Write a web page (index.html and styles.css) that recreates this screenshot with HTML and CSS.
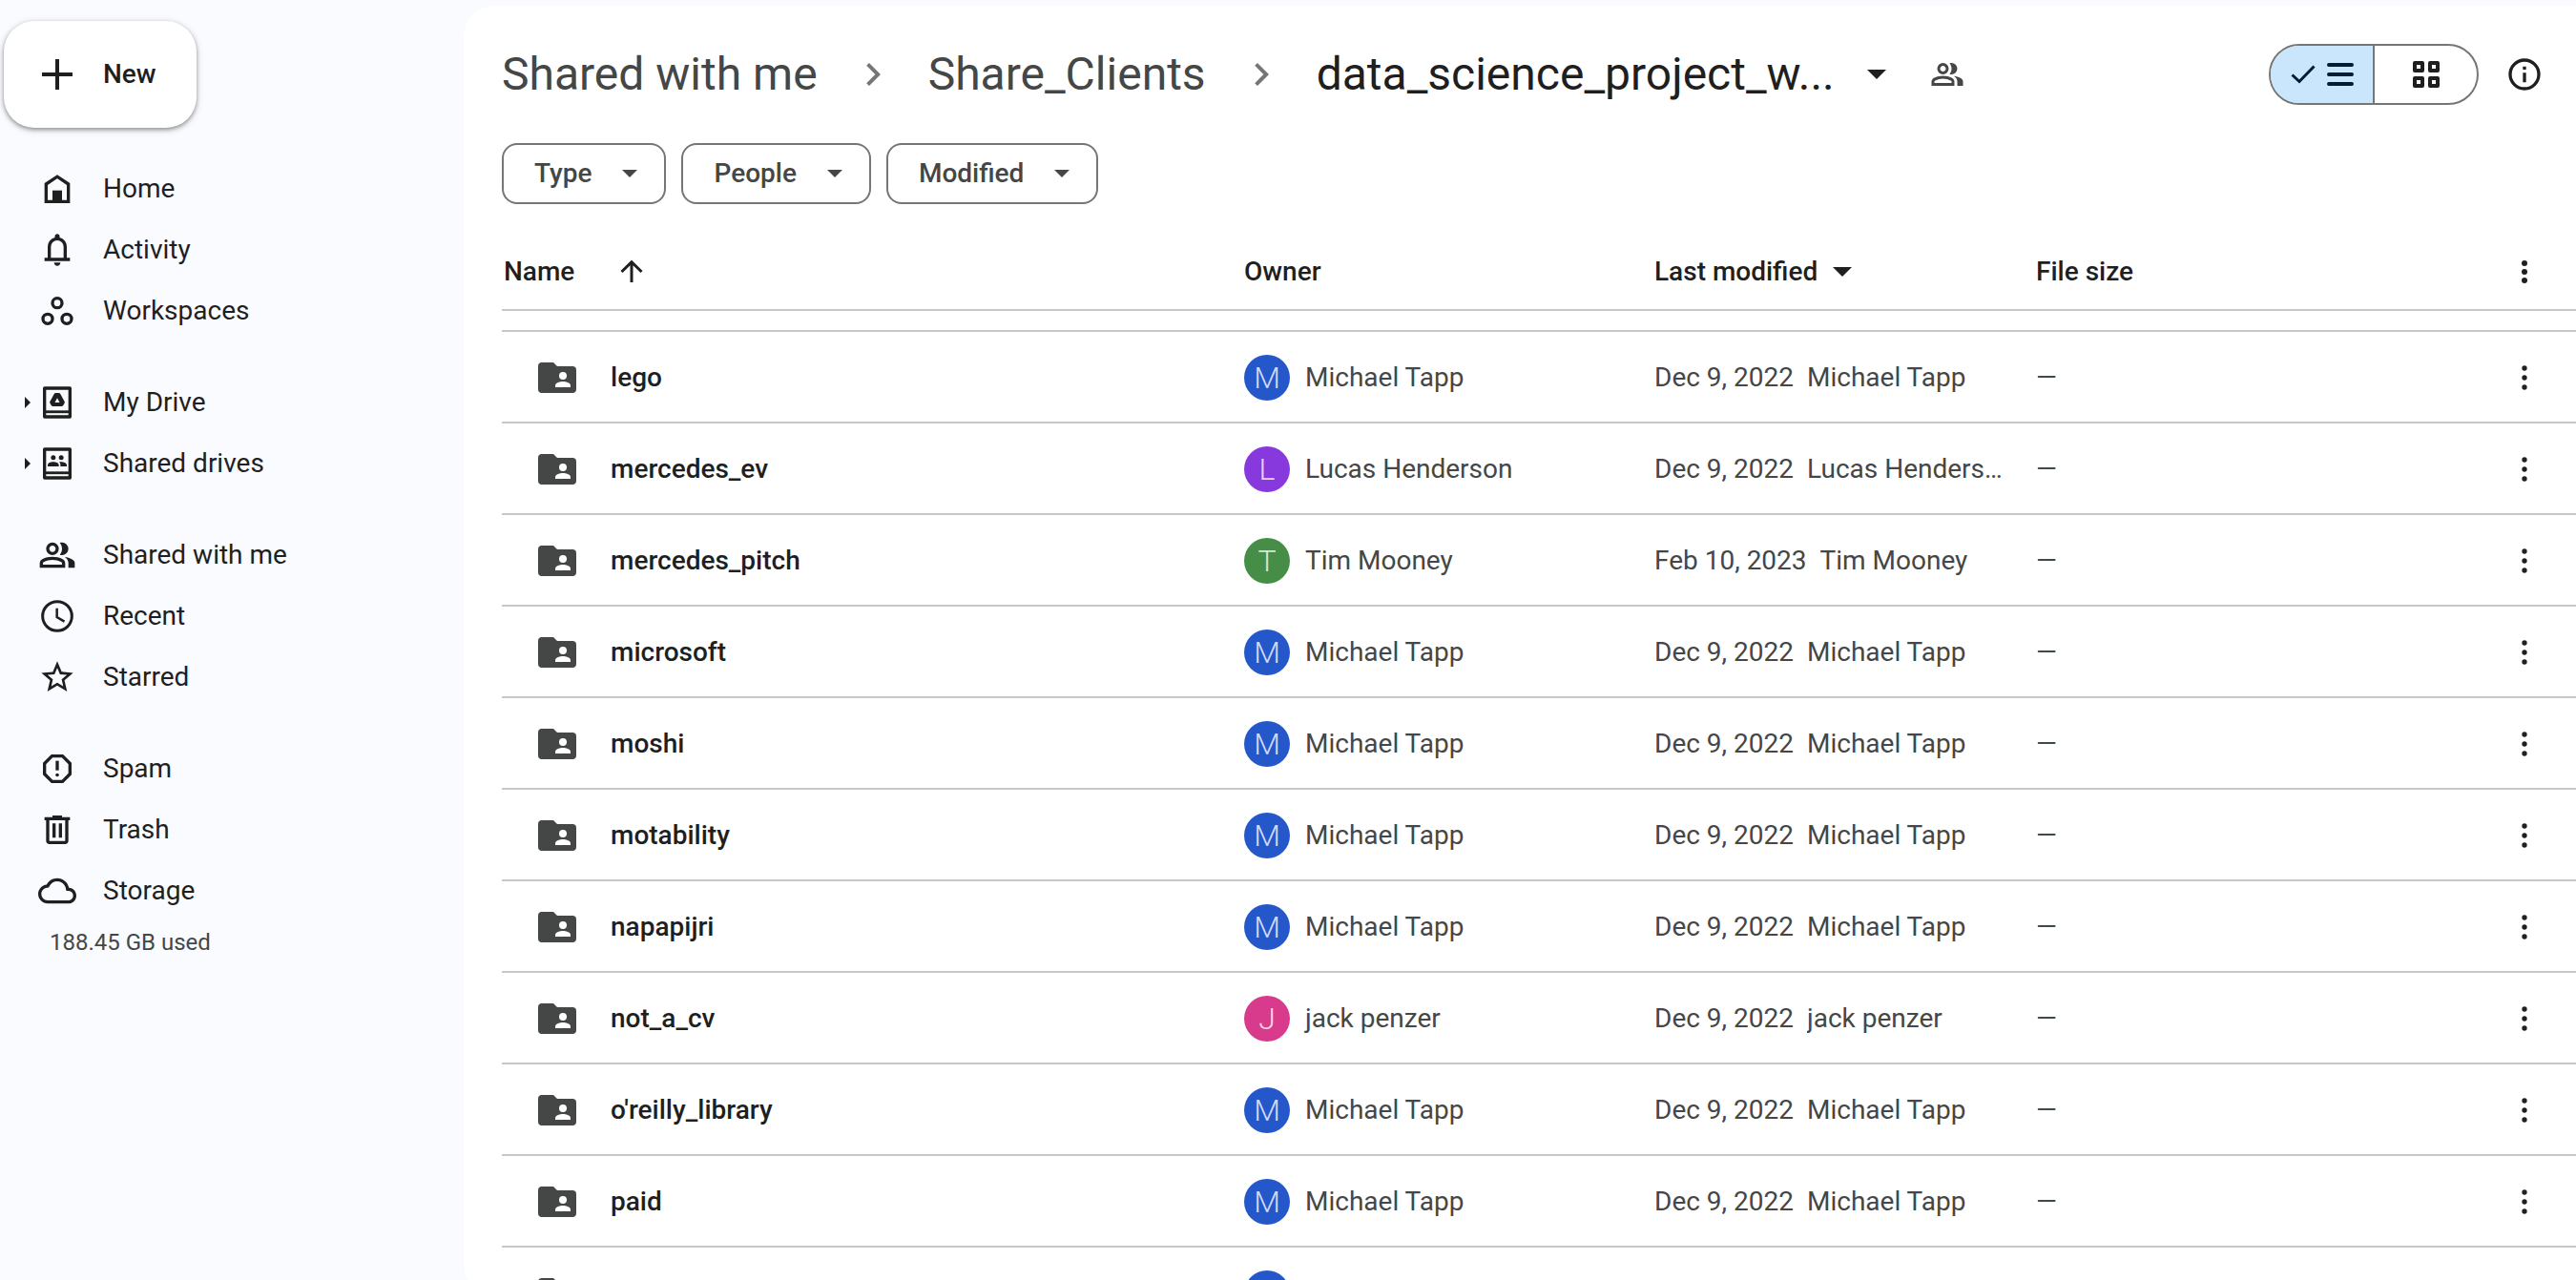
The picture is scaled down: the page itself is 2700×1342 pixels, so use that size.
FILE: index.html
```html
<!DOCTYPE html>
<html lang="en">
<head>
<meta charset="utf-8">
<meta name="viewport" content="width=device-width, initial-scale=1">
<title>data_science_project_w... - Drive</title>
<link rel="stylesheet" href="styles.css">
</head>
<body>
<svg class="sprite" aria-hidden="true">
  <symbol id="plus" viewBox="0 0 32 32"><path d="M14 0h4v14h14v4H18v14h-4V18H0v-4h14z"/></symbol>
  <symbol id="home" viewBox="0 0 24 24"><path d="M5 20V9l7-4.700 7 4.700V20z" fill="none" stroke="currentColor" stroke-width="2"/><path d="M9 13h6v7H9z"/></symbol>
  <symbol id="bell" viewBox="0 0 24 24"><path d="M4 19v-2h2v-7q0-2.075 1.250-3.687T10.500 4.200v-.7q0-.625.438-1.062T12 2t1.063.438T13.500 3.500v.7q2 .5 3.250 2.113T18 10v7h2v2zm8 3q-.825 0-1.412-.587T10 20h4q0 .825-.587 1.413T12 22m-4-5h8v-7q0-1.650-1.175-2.825T12 6 9.175 7.175 8 10z"/></symbol>
  <symbol id="spaces" viewBox="0 0 24 24"><g fill="none" stroke="currentColor" stroke-width="2"><circle cx="12" cy="7" r="3"/><circle cx="6" cy="17" r="3"/><circle cx="18" cy="17" r="3"/></g></symbol>
  <symbol id="drive" viewBox="0 0 24 24"><path d="M4 3h16v18H4z" fill="none" stroke="currentColor" stroke-width="2" stroke-linejoin="round"/><path d="M4 17h16v1.700H4z"/><path d="M11 7h2l2.700 4.900-.9 1.500H9.200l-.9-1.500z" stroke="currentColor" stroke-width="2" stroke-linejoin="round"/><path class="cutout" d="M12 9.200l1.500 2.800h-3z"/></symbol>
  <symbol id="shared-drive" viewBox="0 0 24 24"><path d="M4 3h16v18H4z" fill="none" stroke="currentColor" stroke-width="2" stroke-linejoin="round"/><path d="M4 17h16v1.700H4z"/><circle cx="9.500" cy="8.300" r="1.500"/><circle cx="14.500" cy="8.300" r="1.500"/><path d="M6 13.800v-.9c0-1.300 1.800-2 3.500-2s3.500.7 3.500 2v.9zM14 13.800v-1c0-.7-.3-1.300-.8-1.800 2-.4 4.800.4 4.800 1.900v.9z"/></symbol>
  <symbol id="people" viewBox="0 0 24 24"><path d="M1 20v-2.800q0-.85.438-1.563T2.600 14.550q1.550-.775 3.150-1.163T9 13t3.250.388 3.150 1.162q.725.375 1.163 1.088T17 17.200V20zm18 0v-3q0-1.100-.612-2.113T16.650 13.150q1.275.15 2.400.513t2.100.887q.9.5 1.375 1.112T23 17v3zM9 12q-1.650 0-2.825-1.175T5 8t1.175-2.825T9 4t2.825 1.175T13 8t-1.175 2.825T9 12m10-4q0 1.650-1.175 2.825T15 12q-.275 0-.7-.062T13.600 11.800q.675-.8 1.038-1.775T15 8t-.362-2.025T13.600 4.200q.35-.125.7-.163T15 4q1.650 0 2.825 1.175T19 8M3 18h12v-.8q0-.275-.137-.5t-.363-.35q-1.350-.675-2.725-1.012T9 15t-2.775.338T3.500 16.350q-.225.125-.363.35T3 17.200zm6-8q.825 0 1.413-.587T11 8t-.587-1.412T9 6t-1.412.588T7 8t.588 1.413T9 10"/></symbol>
  <symbol id="clock" viewBox="0 0 24 24"><g fill="none" stroke="currentColor"><circle cx="12" cy="12" r="9.200" stroke-width="1.800"/><path d="M11.800 7v5.600l4.700 2.800" stroke-width="1.500"/></g></symbol>
  <symbol id="star" viewBox="0 0 24 24"><path d="M22 9.240l-7.190-.62L12 2 9.190 8.630 2 9.240l5.460 4.730L5.820 21 12 17.270 18.180 21l-1.630-7.030L22 9.240zM12 15.400l-3.760 2.270 1-4.280-3.320-2.880 4.380-.38L12 6.100l1.710 4.040 4.380.38-3.320 2.880 1 4.280L12 15.400z"/></symbol>
  <symbol id="spam" viewBox="0 0 24 24"><path d="M8.700 4h6.600L20 8.700v6.600L15.300 20H8.700L4 15.300V8.700z" fill="none" stroke="currentColor" stroke-width="2"/><path d="M11 7h2v6h-2z"/><circle cx="12" cy="15.900" r="1.100"/></symbol>
  <symbol id="trash" viewBox="0 0 24 24"><path d="M7 21q-.825 0-1.412-.587T5 19V6H4V4h5V3h6v1h5v2h-1v13q0 .825-.587 1.413T17 21zM17 6H7v13h10zM9 17h2V8H9zm4 0h2V8h-2z"/></symbol>
  <symbol id="cloud" viewBox="0 0 24 24"><path d="M19.350 10.040C18.670 6.590 15.640 4 12 4 9.110 4 6.600 5.640 5.350 8.040 2.340 8.360 0 10.910 0 14c0 3.310 2.690 6 6 6h13c2.760 0 5-2.240 5-5 0-2.640-2.050-4.780-4.650-4.960zM19 18H6c-2.210 0-4-1.790-4-4 0-2.050 1.530-3.760 3.560-3.970l1.070-.11.5-.95C8.080 7.140 9.940 6 12 6c2.620 0 4.880 1.860 5.390 4.430l.3 1.500 1.530.11c1.560.1 2.780 1.410 2.780 2.960 0 1.650-1.350 3-3 3z"/></symbol>
  <symbol id="chevron" viewBox="0 0 24 24"><path d="M10 6L8.590 7.410 13.170 12l-4.580 4.590L10 18l6-6z"/></symbol>
  <symbol id="caret" viewBox="0 0 20 10"><path d="M0 0h20L10 10z"/></symbol>
  <symbol id="expand" viewBox="0 0 6 12"><path d="M0 0l6 6-6 6z"/></symbol>
  <symbol id="arrow-up" viewBox="0 0 24 24"><path d="M12 23V2M1.500 12L12 1.700 22.500 12" fill="none" stroke="currentColor" stroke-width="3"/></symbol>
  <symbol id="check" viewBox="0 0 26 20"><path d="M1.500 10.500l7.500 7L24.500 1.500" fill="none" stroke="currentColor" stroke-width="3"/></symbol>
  <symbol id="list" viewBox="0 0 28 24"><path d="M2 2h24M2 12h24M2 22h24" stroke="currentColor" stroke-width="4" stroke-linecap="round"/></symbol>
  <symbol id="grid" viewBox="0 0 28 28"><g fill="none" stroke="currentColor" stroke-width="4" stroke-linejoin="round"><path d="M2 2h8v8H2zM18 2h8v8h-8zM2 18h8v8H2zM18 18h8v8h-8z"/></g></symbol>
  <symbol id="info" viewBox="0 0 24 24"><circle cx="12" cy="12" r="9" fill="none" stroke="currentColor" stroke-width="2"/><path d="M11 7h2v2h-2zM11 11h2v6h-2z"/></symbol>
  <symbol id="more" viewBox="0 0 24 24"><circle cx="12" cy="6" r="2"/><circle cx="12" cy="12" r="2"/><circle cx="12" cy="18" r="2"/></symbol>
  <symbol id="more-small" viewBox="0 0 24 24"><circle cx="12" cy="6" r="1.600"/><circle cx="12" cy="12" r="1.600"/><circle cx="12" cy="18" r="1.600"/></symbol>
  <symbol id="folder" viewBox="0 0 40 32"><path d="M4 0h12l4 4h16a4 4 0 0 1 4 4v20a4 4 0 0 1-4 4H4a4 4 0 0 1-4-4V4a4 4 0 0 1 4-4z"/><g fill="#fff"><circle cx="26" cy="14" r="4"/><path d="M18 26v-2c0-2.700 5.300-4 8-4s8 1.300 8 4v2z"/></g></symbol>
</svg>

<div class="app">
  <aside class="sidebar">
    <button class="new-button" type="button"><svg class="icon-plus"><use href="#plus"/></svg>New</button>
    <nav class="nav" aria-label="Drive">
      <ul class="nav-group">
        <li><a class="nav-item" href="#"><svg class="icon"><use href="#home"/></svg>Home</a></li>
        <li><a class="nav-item" href="#"><svg class="icon"><use href="#bell"/></svg>Activity</a></li>
        <li><a class="nav-item" href="#"><svg class="icon"><use href="#spaces"/></svg>Workspaces</a></li>
      </ul>
      <ul class="nav-group">
        <li><a class="nav-item" href="#"><svg class="icon-expand"><use href="#expand"/></svg><svg class="icon"><use href="#drive"/></svg>My Drive</a></li>
        <li><a class="nav-item" href="#"><svg class="icon-expand"><use href="#expand"/></svg><svg class="icon"><use href="#shared-drive"/></svg>Shared drives</a></li>
      </ul>
      <ul class="nav-group">
        <li><a class="nav-item" href="#"><svg class="icon"><use href="#people"/></svg>Shared with me</a></li>
        <li><a class="nav-item" href="#"><svg class="icon"><use href="#clock"/></svg>Recent</a></li>
        <li><a class="nav-item" href="#"><svg class="icon"><use href="#star"/></svg>Starred</a></li>
      </ul>
      <ul class="nav-group">
        <li><a class="nav-item" href="#"><svg class="icon"><use href="#spam"/></svg>Spam</a></li>
        <li><a class="nav-item" href="#"><svg class="icon"><use href="#trash"/></svg>Trash</a></li>
        <li><a class="nav-item" href="#"><svg class="icon"><use href="#cloud"/></svg>Storage</a></li>
      </ul>
    </nav>
    <p class="quota">188.45 GB used</p>
  </aside>

  <main class="panel">
    <header class="topbar">
      <nav class="crumbs" aria-label="Breadcrumb">
        <a class="crumb" href="#">Shared with me</a>
        <svg class="icon-chevron"><use href="#chevron"/></svg>
        <a class="crumb" href="#">Share_Clients</a>
        <svg class="icon-chevron"><use href="#chevron"/></svg>
        <button class="crumb crumb-current" type="button">data_science_project_w...<svg class="icon-caret"><use href="#caret"/></svg></button>
        <button class="share-button" type="button" aria-label="Manage access"><svg class="icon-medium"><use href="#people"/></svg></button>
      </nav>
      <div class="view-switch">
        <button class="view-option view-option-on" type="button" aria-pressed="true" aria-label="List layout"><svg class="icon-check"><use href="#check"/></svg><svg class="icon-list"><use href="#list"/></svg></button>
        <button class="view-option" type="button" aria-pressed="false" aria-label="Grid layout"><svg class="icon-grid"><use href="#grid"/></svg></button>
      </div>
      <button class="info-button" type="button" aria-label="View details"><svg class="icon"><use href="#info"/></svg></button>
    </header>

    <div class="filters">
      <button class="chip" type="button">Type<svg class="icon-caret-small"><use href="#caret"/></svg></button>
      <button class="chip" type="button">People<svg class="icon-caret-small"><use href="#caret"/></svg></button>
      <button class="chip" type="button">Modified<svg class="icon-caret-small"><use href="#caret"/></svg></button>
    </div>

    <table class="files">
      <colgroup><col><col class="col-owner"><col class="col-modified"><col class="col-size"><col class="col-menu"></colgroup>
      <thead>
        <tr>
          <th scope="col"><button class="sort sort-name" type="button">Name<svg class="icon-arrow"><use href="#arrow-up"/></svg></button></th>
          <th scope="col">Owner</th>
          <th scope="col"><button class="sort" type="button">Last modified<svg class="icon-caret"><use href="#caret"/></svg></button></th>
          <th scope="col">File size</th>
          <th scope="col"><button class="menu-button" type="button" aria-label="More"><svg class="icon-medium"><use href="#more"/></svg></button></th>
        </tr>
      </thead>
      <tbody>
        <tr class="row-clipped" aria-hidden="true"><td colspan="5"></td></tr>
        <tr>
          <td><a class="file" href="#"><svg class="icon-folder"><use href="#folder"/></svg>lego</a></td>
          <td><div class="owner"><span class="avatar avatar-blue">M</span>Michael Tapp</div></td>
          <td><div class="modified"><span>Dec 9, 2022</span><span class="editor">Michael Tapp</span></div></td>
          <td>—</td>
          <td><button class="menu-button" type="button" aria-label="More actions"><svg class="icon"><use href="#more-small"/></svg></button></td>
        </tr>
        <tr>
          <td><a class="file" href="#"><svg class="icon-folder"><use href="#folder"/></svg>mercedes_ev</a></td>
          <td><div class="owner"><span class="avatar avatar-purple">L</span>Lucas Henderson</div></td>
          <td><div class="modified"><span>Dec 9, 2022</span><span class="editor">Lucas Henderson</span></div></td>
          <td>—</td>
          <td><button class="menu-button" type="button" aria-label="More actions"><svg class="icon"><use href="#more-small"/></svg></button></td>
        </tr>
        <tr>
          <td><a class="file" href="#"><svg class="icon-folder"><use href="#folder"/></svg>mercedes_pitch</a></td>
          <td><div class="owner"><span class="avatar avatar-green">T</span>Tim Mooney</div></td>
          <td><div class="modified"><span>Feb 10, 2023</span><span class="editor">Tim Mooney</span></div></td>
          <td>—</td>
          <td><button class="menu-button" type="button" aria-label="More actions"><svg class="icon"><use href="#more-small"/></svg></button></td>
        </tr>
        <tr>
          <td><a class="file" href="#"><svg class="icon-folder"><use href="#folder"/></svg>microsoft</a></td>
          <td><div class="owner"><span class="avatar avatar-blue">M</span>Michael Tapp</div></td>
          <td><div class="modified"><span>Dec 9, 2022</span><span class="editor">Michael Tapp</span></div></td>
          <td>—</td>
          <td><button class="menu-button" type="button" aria-label="More actions"><svg class="icon"><use href="#more-small"/></svg></button></td>
        </tr>
        <tr>
          <td><a class="file" href="#"><svg class="icon-folder"><use href="#folder"/></svg>moshi</a></td>
          <td><div class="owner"><span class="avatar avatar-blue">M</span>Michael Tapp</div></td>
          <td><div class="modified"><span>Dec 9, 2022</span><span class="editor">Michael Tapp</span></div></td>
          <td>—</td>
          <td><button class="menu-button" type="button" aria-label="More actions"><svg class="icon"><use href="#more-small"/></svg></button></td>
        </tr>
        <tr>
          <td><a class="file" href="#"><svg class="icon-folder"><use href="#folder"/></svg>motability</a></td>
          <td><div class="owner"><span class="avatar avatar-blue">M</span>Michael Tapp</div></td>
          <td><div class="modified"><span>Dec 9, 2022</span><span class="editor">Michael Tapp</span></div></td>
          <td>—</td>
          <td><button class="menu-button" type="button" aria-label="More actions"><svg class="icon"><use href="#more-small"/></svg></button></td>
        </tr>
        <tr>
          <td><a class="file" href="#"><svg class="icon-folder"><use href="#folder"/></svg>napapijri</a></td>
          <td><div class="owner"><span class="avatar avatar-blue">M</span>Michael Tapp</div></td>
          <td><div class="modified"><span>Dec 9, 2022</span><span class="editor">Michael Tapp</span></div></td>
          <td>—</td>
          <td><button class="menu-button" type="button" aria-label="More actions"><svg class="icon"><use href="#more-small"/></svg></button></td>
        </tr>
        <tr>
          <td><a class="file" href="#"><svg class="icon-folder"><use href="#folder"/></svg>not_a_cv</a></td>
          <td><div class="owner"><span class="avatar avatar-pink">J</span>jack penzer</div></td>
          <td><div class="modified"><span>Dec 9, 2022</span><span class="editor">jack penzer</span></div></td>
          <td>—</td>
          <td><button class="menu-button" type="button" aria-label="More actions"><svg class="icon"><use href="#more-small"/></svg></button></td>
        </tr>
        <tr>
          <td><a class="file" href="#"><svg class="icon-folder"><use href="#folder"/></svg>o'reilly_library</a></td>
          <td><div class="owner"><span class="avatar avatar-blue">M</span>Michael Tapp</div></td>
          <td><div class="modified"><span>Dec 9, 2022</span><span class="editor">Michael Tapp</span></div></td>
          <td>—</td>
          <td><button class="menu-button" type="button" aria-label="More actions"><svg class="icon"><use href="#more-small"/></svg></button></td>
        </tr>
        <tr>
          <td><a class="file" href="#"><svg class="icon-folder"><use href="#folder"/></svg>paid</a></td>
          <td><div class="owner"><span class="avatar avatar-blue">M</span>Michael Tapp</div></td>
          <td><div class="modified"><span>Dec 9, 2022</span><span class="editor">Michael Tapp</span></div></td>
          <td>—</td>
          <td><button class="menu-button" type="button" aria-label="More actions"><svg class="icon"><use href="#more-small"/></svg></button></td>
        </tr>
        <tr aria-hidden="true">
          <td><div class="file"><svg class="icon-folder"><use href="#folder"/></svg></div></td>
          <td><div class="owner"><span class="avatar avatar-blue"></span></div></td>
          <td></td>
          <td></td>
          <td></td>
        </tr>
      </tbody>
    </table>
  </main>
</div>
</body>
</html>
```

FILE: styles.css
```css
:root {
  --surface: #f9fbff;
  --ink: #1f1f1f;
  --ink-soft: #444746;
  --outline: #747775;
  --line: #c7c7c7;
}

* {
  box-sizing: border-box;
}

body {
  margin: 0;
  background: var(--surface);
  color: var(--ink);
  font: 400 28px/40px Roboto, "Liberation Sans", sans-serif;
}

button {
  margin: 0;
  padding: 0;
  border: 0;
  background: none;
  color: inherit;
  font: inherit;
  cursor: pointer;
}

a {
  color: inherit;
  text-decoration: none;
}

ul {
  margin: 0;
  padding: 0;
  list-style: none;
}

svg {
  display: block;
  flex: none;
  fill: currentColor;
}

.sprite {
  position: absolute;
  width: 0;
  height: 0;
}

.cutout {
  fill: var(--surface);
}

.icon { width: 40px; height: 40px; }
.icon-medium { width: 36px; height: 36px; }
.icon-plus { width: 32px; height: 32px; }
.icon-expand { width: 6px; height: 12px; }
.icon-chevron { width: 48px; height: 48px; color: var(--outline); }
.icon-caret { width: 20px; height: 10px; }
.icon-caret-small { width: 16px; height: 8px; }
.icon-arrow { width: 24px; height: 24px; }
.icon-check { width: 26px; height: 20px; }
.icon-list { width: 28px; height: 24px; }
.icon-grid { width: 28px; height: 28px; }
.icon-folder { width: 40px; height: 32px; color: var(--ink-soft); }

.app {
  display: flex;
  height: 100vh;
  padding-top: 6px;
  overflow: hidden;
}

/* Sidebar */

.sidebar {
  flex: none;
  width: 486px;
  padding: 16px 0 0 4px;
}

.new-button {
  display: flex;
  align-items: center;
  gap: 32px;
  padding: 36px 42px 36px 40px;
  border-radius: 32px;
  background: #fff;
  box-shadow: 0 2px 4px rgba(0, 0, 0, .35), 0 2px 8px rgba(0, 0, 0, .15);
  font-weight: 500;
}

.nav {
  display: flex;
  flex-direction: column;
  gap: 32px;
  margin-top: 32px;
}

.nav-item {
  display: flex;
  align-items: center;
  justify-content: flex-start;
  height: 64px;
  padding-left: 36px;
  gap: 28px;
}

.icon-expand {
  margin: 0 -20px 0 -14px;
}

.quota {
  margin: 2px 0 0;
  padding-left: 48px;
  color: var(--ink-soft);
  font-size: 24px;
}

/* Content panel */

.panel {
  flex: 1;
  min-width: 0;
  margin-bottom: -16px;
  padding: 40px 0 0 40px;
  border-radius: 32px 0 0 32px;
  background: #fff;
  overflow: hidden;
}

.topbar {
  display: flex;
  align-items: center;
  height: 64px;
}

.crumbs {
  display: flex;
  flex: 1;
  align-items: center;
  gap: 34px;
  min-width: 0;
}

.crumb {
  color: var(--ink-soft);
  font-size: 48px;
  line-height: 64px;
  white-space: nowrap;
}

.crumb-current {
  display: flex;
  align-items: center;
  gap: 34px;
  color: var(--ink);
}

.share-button {
  padding: 0 12px;
  color: var(--ink-soft);
}

.view-switch {
  display: flex;
  width: 220px;
  height: 64px;
  border: 2px solid var(--outline);
  border-radius: 32px;
  overflow: hidden;
}

.view-option {
  display: flex;
  flex: 1;
  align-items: center;
  justify-content: center;
  gap: 12px;
}

.view-option-on {
  border-right: 2px solid var(--outline);
  background: #c9e6fc;
  color: #001d35;
}

.info-button {
  display: flex;
  justify-content: center;
  width: 96px;
  margin-right: 6px;
}

.filters {
  display: flex;
  gap: 16px;
  margin-top: 40px;
}

.chip {
  display: flex;
  align-items: center;
  gap: 32px;
  height: 64px;
  padding: 0 28px 0 32px;
  border: 2px solid var(--outline);
  border-radius: 16px;
  color: var(--ink-soft);
  font-weight: 500;
}

/* File list */

.files {
  width: 100%;
  margin-top: 30px;
  border-collapse: collapse;
  table-layout: fixed;
}

.col-owner { width: 430px; }
.col-modified { width: 400px; }
.col-size { width: 458px; }
.col-menu { width: 108px; }

th,
td {
  height: 96px;
  padding: 0;
  box-shadow: inset 0 -2px var(--line);
  text-align: left;
  vertical-align: middle;
}

th {
  height: 82px;
  font-weight: 500;
}

td {
  color: var(--ink-soft);
}

.row-clipped td {
  height: 22px;
}

.sort {
  display: flex;
  align-items: center;
  gap: 16px;
}

.sort-name {
  gap: 48px;
  padding-left: 2px;
}

.file {
  display: flex;
  align-items: center;
  gap: 36px;
  padding-left: 38px;
  color: var(--ink);
  font-weight: 500;
}

.owner {
  display: flex;
  align-items: center;
  gap: 16px;
}

.avatar {
  width: 48px;
  height: 48px;
  border-radius: 50%;
  color: rgba(255, 255, 255, .8);
  font-size: 32px;
  font-weight: 300;
  line-height: 48px;
  text-align: center;
}

.avatar-blue { background: #2457ca; }
.avatar-purple { background: #8839de; }
.avatar-green { background: #468e48; }
.avatar-pink { background: #d83a8c; }

.modified {
  display: flex;
  gap: 14px;
  padding-right: 24px;
  white-space: nowrap;
}

.editor {
  min-width: 0;
  overflow: hidden;
  text-overflow: ellipsis;
}

.menu-button {
  display: flex;
  justify-content: center;
  width: 100%;
  color: var(--ink);
}
```
